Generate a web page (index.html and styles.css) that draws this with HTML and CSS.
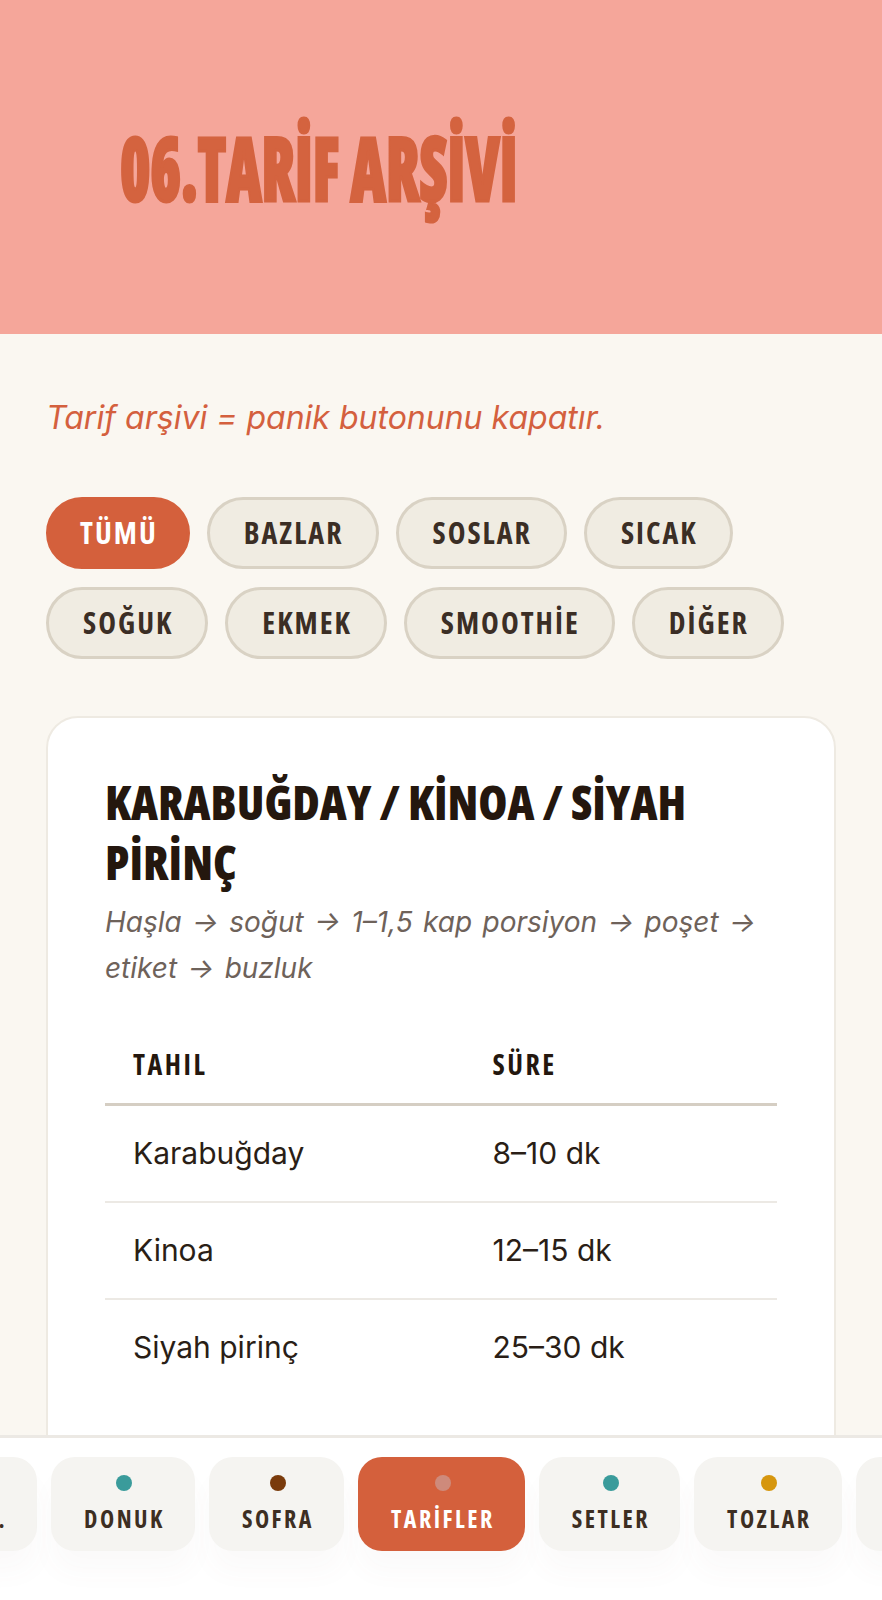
FILE: index.html
```html
<!DOCTYPE html>
<html lang="tr">
<head>
<meta charset="utf-8">
<title>Tarif Arşivi</title>
<link rel="stylesheet" href="styles.css">
</head>
<body>
<header class="hero">
  <h1 class="hero-title">06.TARİF ARŞİVİ</h1>
</header>

<main class="content">
  <p class="tagline">Tarif arşivi = panik butonunu kapatır.</p>

  <div class="filters">
    <button class="pill pill-active">TÜMÜ</button>
    <button class="pill">BAZLAR</button>
    <button class="pill">SOSLAR</button>
    <button class="pill">SICAK</button>
    <button class="pill">SOĞUK</button>
    <button class="pill">EKMEK</button>
    <button class="pill">SMOOTHİE</button>
    <button class="pill">DİĞER</button>
  </div>

  <article class="card">
    <h2 class="card-title">KARABUĞDAY / KİNOA / SİYAH PİRİNÇ</h2>
    <p class="card-sub">Haşla → soğut → 1–1,5 kap porsiyon → poşet → etiket → buzluk</p>
    <table class="times">
      <thead>
        <tr><th class="col-grain">TAHIL</th><th>SÜRE</th></tr>
      </thead>
      <tbody>
        <tr><td>Karabuğday</td><td>8–10 dk</td></tr>
        <tr><td>Kinoa</td><td>12–15 dk</td></tr>
        <tr><td>Siyah pirinç</td><td>25–30 dk</td></tr>
      </tbody>
    </table>
  </article>
</main>

<nav class="tabbar" id="tabbar">
  <div class="tab-track">
    <a class="tab"><span class="dot dot-gold"></span><span class="tab-label">KİLER.</span></a>
    <a class="tab"><span class="dot dot-teal"></span><span class="tab-label">DONUK</span></a>
    <a class="tab"><span class="dot dot-brown"></span><span class="tab-label">SOFRA</span></a>
    <a class="tab tab-active" id="tab-active"><span class="dot dot-faded"></span><span class="tab-label">TARİFLER</span></a>
    <a class="tab"><span class="dot dot-teal"></span><span class="tab-label">SETLER</span></a>
    <a class="tab"><span class="dot dot-gold"></span><span class="tab-label">TOZLAR</span></a>
    <a class="tab"><span class="dot dot-brown"></span><span class="tab-label">NOTLAR</span></a>
  </div>
</nav>
<script src="app.js"></script>
</body>
</html>
```

FILE: styles.css
```css
* { box-sizing: border-box; }

html, body {
  margin: 0;
  padding: 0;
}

body {
  background: #FAF7F1;
  font-family: Inter, "Noto Sans", sans-serif;
  color: #24170E;
}

.hero {
  height: 334px;
  background: #F5A69A;
  display: flex;
  align-items: center;
  padding-left: 120px;
}

.hero-title {
  margin: 0;
  font-family: "Open Sans", sans-serif;
  font-stretch: 75%;
  font-weight: 800;
  font-size: 88px;
  line-height: 1;
  color: #D4633F;
  -webkit-text-stroke: 3px #D4633F;
  white-space: nowrap;
  transform: scaleX(0.7);
  transform-origin: left center;
}

.content {
  padding: 65px 46px 0;
}

.tagline {
  margin: 0;
  font-style: italic;
  font-size: 32px;
  line-height: 38px;
  color: #D4603E;
}

.filters {
  margin-top: 60px;
  display: flex;
  flex-wrap: wrap;
  gap: 18px 17px;
}

.pill {
  font-family: "Open Sans", sans-serif;
  font-stretch: 75%;
  font-weight: 700;
  font-size: 30px;
  line-height: 36px;
  letter-spacing: 2px;
  padding: 15px 32px 15px 34px;
  border: 3px solid #D9D2C4;
  background: #F0ECE2;
  color: #3B2E25;
  border-radius: 40px;
}

.pill-active {
  background: #D4603C;
  border-color: #D4603C;
  color: #FFFFFF;
  padding-left: 31px;
  padding-right: 29px;
}

.card {
  margin-top: 57px;
  background: #FFFFFF;
  border: 2px solid #EEEAE2;
  border-radius: 32px;
  padding: 54px 57px 200px;
}

.card-title {
  margin: 0;
  font-family: "Open Sans", sans-serif;
  font-stretch: 75%;
  font-weight: 800;
  font-size: 47px;
  line-height: 60px;
  letter-spacing: 0;
  color: #24170E;
}

.card-sub {
  margin: 7px 0 0;
  font-style: italic;
  font-size: 28px;
  line-height: 46px;
  word-spacing: 2.5px;
  color: #6E625A;
}

.times {
  margin-top: 34px;
  width: 100%;
  border-collapse: collapse;
}

.times th {
  font-family: "Open Sans", sans-serif;
  font-stretch: 75%;
  font-weight: 700;
  font-size: 28px;
  line-height: 30px;
  letter-spacing: 2.5px;
  text-align: left;
  padding: 24px 28px;
  color: #24170E;
  border-bottom: 3px solid #D5CEC3;
}

.times .col-grain { width: 53.5%; }

.times td {
  font-size: 30px;
  line-height: 36px;
  padding: 29px 28px 30px;
  color: #2A1E16;
  border-bottom: 2px solid #ECE9E4;
}

.times tbody tr:last-child td { border-bottom: none; }

.tabbar {
  position: fixed;
  left: 0;
  right: 0;
  bottom: 0;
  height: 165px;
  background: #FFFFFF;
  border-top: 3px solid #ECE9E4;
  padding: 19px 0 49px;
  overflow: hidden;
}

.tab-track {
  display: flex;
  gap: 14px;
  width: max-content;
  padding: 0 300px;
}

.tab {
  display: flex;
  flex-direction: column;
  align-items: center;
  gap: 14px;
  padding: 18px 30px 18px 33px;
  background: #F5F4F1;
  border-radius: 24px;
  box-shadow: 0 22px 26px rgba(120, 110, 100, 0.03);
}

.tab-label {
  font-family: "Open Sans", sans-serif;
  font-stretch: 75%;
  font-weight: 700;
  font-size: 24px;
  line-height: 28px;
  letter-spacing: 2.5px;
  color: #3D2E22;
  white-space: nowrap;
}

.dot {
  width: 16px;
  height: 16px;
  border-radius: 50%;
}

.dot-teal { background: #3A9B9B; }
.dot-brown { background: #7A3B0C; }
.dot-gold { background: #D6960E; }
.dot-faded { background: rgba(200, 190, 200, 0.45); }

.tab-active {
  background: #D4603C;
}

.tab-active .tab-label { color: #FFFFFF; }
```

FILE: app.js
```js
(function () {
  var bar = document.getElementById('tabbar');
  var act = document.getElementById('tab-active');
  if (!bar || !act) return;
  var br = bar.getBoundingClientRect();
  var ar = act.getBoundingClientRect();
  bar.scrollLeft = bar.scrollLeft + (ar.left - br.left) - (bar.clientWidth - ar.width) / 2;
})();
```
